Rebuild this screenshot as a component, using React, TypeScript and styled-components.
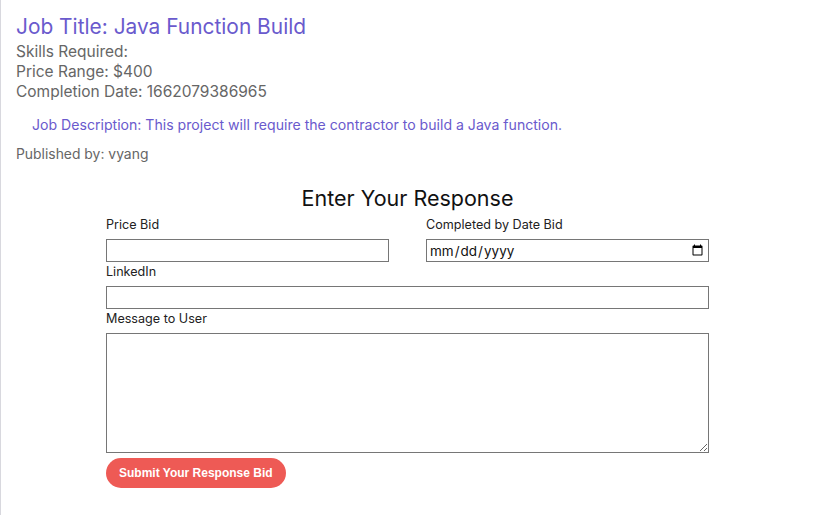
import React from "react";
import styled, { createGlobalStyle } from "styled-components";

const Global = createGlobalStyle`
  html, body { margin: 0; padding: 0; background: #fff; }
  body { font-family: Inter, "Noto Sans", sans-serif; }
`;

const Card = styled.div`
  box-sizing: border-box;
  width: 814px;
  min-height: 515px;
  border-left: 1px solid #d8d8de;
  border-top-right-radius: 4px;
  padding: 14px 0 0 15px;
`;

const Title = styled.h1`
  margin: 0;
  font-size: 20.9px;
  font-weight: 400;
  line-height: 26px;
  color: #6a5acd;
`;

const Meta = styled.div`
  margin-top: 2px;
  font-size: 15.5px;
  line-height: 20px;
  color: #666;
`;

const Description = styled.p`
  margin: 14px 0 0 16px;
  font-size: 14.1px;
  line-height: 18px;
  color: #6a5acd;
`;

const Published = styled.p`
  margin: 11px 0 0;
  font-size: 13.9px;
  line-height: 18px;
  color: #666;
`;

const Form = styled.form`
  width: 603px;
  margin: 21px 0 0 90px;
  display: flex;
  flex-direction: column;
`;

const Heading = styled.h2`
  margin: 0 0 5px;
  text-align: center;
  font-size: 21.5px;
  font-weight: 400;
  line-height: 28px;
  color: #111;
`;

const Row = styled.div`
  display: grid;
  grid-template-columns: 283px 283px;
  column-gap: 37px;
`;

const Field = styled.div`
  display: flex;
  flex-direction: column;
`;

const Label = styled.label`
  font-size: 12.6px;
  line-height: 15px;
  color: #222;
  margin: 0 0 7px;
`;

const Input = styled.input`
  box-sizing: border-box;
  width: 100%;
  height: 23px;
  margin: 0 0 2px;
  border: 1px solid #767676;
  border-radius: 0;
  padding: 0 2px;
  font-family: Inter, "Noto Sans", sans-serif;
  font-size: 13.5px;
  color: #111;
  background: #fff;
`;

const TextArea = styled.textarea`
  box-sizing: border-box;
  width: 100%;
  height: 120px;
  border: 1px solid #767676;
  border-radius: 0;
  padding: 2px;
  font-family: Inter, "Noto Sans", sans-serif;
  font-size: 13px;
`;

const Submit = styled.button`
  align-self: flex-start;
  margin-top: 5px;
  height: 30px;
  padding: 0 13px;
  border: none;
  border-radius: 15px;
  background: #ee5a55;
  color: #fff;
  font-family: "Liberation Sans", Arial, sans-serif;
  font-weight: 700;
  font-size: 12px;
  cursor: pointer;
`;

export default function App() {
  return (
    <>
      <Global />
      <Card>
        <Title>Job Title: Java Function Build</Title>
        <Meta>
          Skills Required:
          <br />
          Price Range: $400
          <br />
          Completion Date: 1662079386965
        </Meta>
        <Description>
          Job Description: This project will require the contractor to build a Java function.
        </Description>
        <Published>Published by: vyang</Published>
        <Form onSubmit={(e) => e.preventDefault()}>
          <Heading>Enter Your Response</Heading>
          <Row>
            <Field>
              <Label>Price Bid</Label>
              <Input type="text" />
            </Field>
            <Field>
              <Label>Completed by Date Bid</Label>
              <Input type="date" />
            </Field>
          </Row>
          <Field>
            <Label>LinkedIn</Label>
            <Input type="text" />
          </Field>
          <Field>
            <Label>Message to User</Label>
            <TextArea />
          </Field>
          <Submit type="submit">Submit Your Response Bid</Submit>
        </Form>
      </Card>
    </>
  );
}
